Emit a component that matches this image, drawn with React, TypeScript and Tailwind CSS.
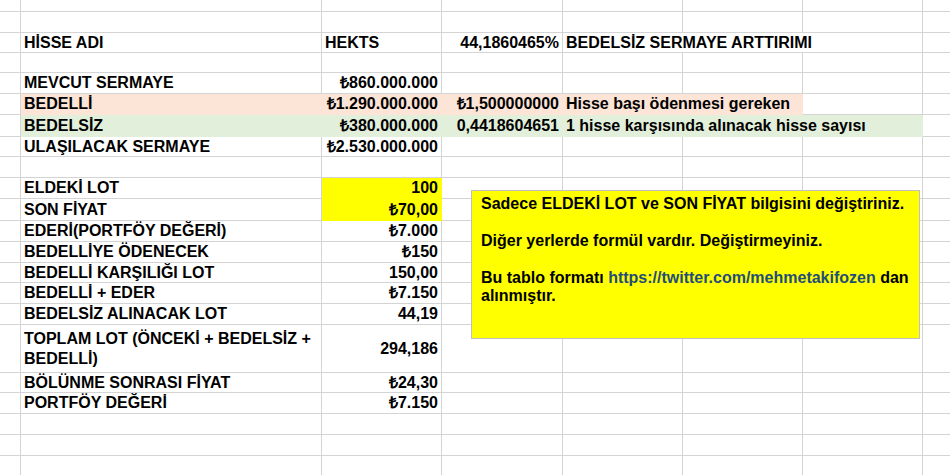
const W = [21, 301, 120, 121, 120, 120, 120, 28];

type Cell = {
  from: number;
  to?: number;
  text?: string;
  right?: boolean;
  fill?: "orange" | "green" | "yellow";
  wrap?: boolean;
};

type Row = { h: number; cells: Cell[] };

const fills = {
  orange: "bg-[#fce4d6] border-transparent",
  green: "bg-[#e2efda] border-transparent",
  yellow: "bg-[#ffff00] border-transparent",
};

const rows: Row[] = [
  { h: 12, cells: [] },
  { h: 21, cells: [] },
  {
    h: 20,
    cells: [
      { from: 1, text: "HİSSE ADI" },
      { from: 2, text: "HEKTS" },
      { from: 3, text: "44,1860465%", right: true },
      { from: 4, to: 6, text: "BEDELSİZ SERMAYE ARTTIRIMI" },
    ],
  },
  { h: 20, cells: [] },
  {
    h: 21,
    cells: [
      { from: 1, text: "MEVCUT SERMAYE" },
      { from: 2, text: "₺860.000.000", right: true },
    ],
  },
  {
    h: 21,
    cells: [
      { from: 1, text: "BEDELLİ", fill: "orange" },
      { from: 2, text: "₺1.290.000.000", right: true, fill: "orange" },
      { from: 3, text: "₺1,500000000", right: true, fill: "orange" },
      { from: 4, to: 5, text: "Hisse başı ödenmesi gereken", fill: "orange" },
    ],
  },
  {
    h: 22,
    cells: [
      { from: 1, text: "BEDELSİZ", fill: "green" },
      { from: 2, text: "₺380.000.000", right: true, fill: "green" },
      { from: 3, text: "0,4418604651", right: true, fill: "green" },
      { from: 4, to: 6, text: "1 hisse karşısında alınacak hisse sayısı", fill: "green" },
    ],
  },
  {
    h: 20,
    cells: [
      { from: 1, text: "ULAŞILACAK SERMAYE" },
      { from: 2, text: "₺2.530.000.000", right: true },
    ],
  },
  { h: 21, cells: [] },
  {
    h: 21,
    cells: [
      { from: 1, text: "ELDEKİ LOT" },
      { from: 2, text: "100", right: true, fill: "yellow" },
    ],
  },
  {
    h: 22,
    cells: [
      { from: 1, text: "SON FİYAT" },
      { from: 2, text: "₺70,00", right: true, fill: "yellow" },
    ],
  },
  {
    h: 21,
    cells: [
      { from: 1, text: "EDERİ(PORTFÖY DEĞERİ)" },
      { from: 2, text: "₺7.000", right: true },
    ],
  },
  {
    h: 21,
    cells: [
      { from: 1, text: "BEDELLİYE ÖDENECEK" },
      { from: 2, text: "₺150", right: true },
    ],
  },
  {
    h: 20,
    cells: [
      { from: 1, text: "BEDELLİ KARŞILIĞI LOT" },
      { from: 2, text: "150,00", right: true },
    ],
  },
  {
    h: 21,
    cells: [
      { from: 1, text: "BEDELLİ + EDER" },
      { from: 2, text: "₺7.150", right: true },
    ],
  },
  {
    h: 21,
    cells: [
      { from: 1, text: "BEDELSİZ ALINACAK LOT" },
      { from: 2, text: "44,19", right: true },
    ],
  },
  {
    h: 48,
    cells: [
      { from: 1, text: "TOPLAM LOT (ÖNCEKİ + BEDELSİZ + BEDELLİ)", wrap: true },
      { from: 2, text: "294,186", right: true },
    ],
  },
  {
    h: 20,
    cells: [
      { from: 1, text: "BÖLÜNME SONRASI FİYAT" },
      { from: 2, text: "₺24,30", right: true },
    ],
  },
  {
    h: 21,
    cells: [
      { from: 1, text: "PORTFÖY DEĞERİ" },
      { from: 2, text: "₺7.150", right: true },
    ],
  },
  { h: 21, cells: [] },
  { h: 21, cells: [] },
  { h: 21, cells: [] },
];

function SheetRow({ row }: { row: Row }) {
  const out = [];
  let c = 0;
  while (c < W.length) {
    const cell = row.cells.find((x) => x.from === c) ?? { from: c };
    const to = cell.to ?? c;
    let width = 0;
    for (let i = c; i <= to; i++) width += W[i];
    out.push(
      <div
        key={c}
        className={`flex shrink-0 items-center border-r border-b px-[3px] ${
          cell.fill ? fills[cell.fill] : "border-[#d4d4d4]"
        } ${cell.right ? "justify-end" : ""} ${
          cell.wrap ? "leading-[20px] whitespace-normal" : "whitespace-nowrap leading-[18px]"
        }`}
        style={{ width }}
      >
        {cell.text}
      </div>
    );
    c = to + 1;
  }
  return (
    <div className="flex shrink-0" style={{ height: row.h }}>
      {out}
    </div>
  );
}

export default function App() {
  return (
    <div className="relative h-[475px] w-[950px] overflow-hidden bg-white font-['Liberation_Sans',Arial,sans-serif] text-[16px] font-bold text-black">
      <div className="flex flex-col">
        {rows.map((row, i) => (
          <SheetRow key={i} row={row} />
        ))}
      </div>

      <div className="absolute left-[471px] top-[190px] h-[149px] w-[449px] border border-[#bfbfbf] bg-[#ffff00] pl-[9px] pt-[4px] leading-[18.4px] whitespace-nowrap">
        <div>Sadece ELDEKİ LOT ve SON FİYAT bilgisini değiştiriniz.</div>
        <div className="h-[18.4px]" />
        <div>Diğer yerlerde formül vardır. Değiştirmeyiniz.</div>
        <div className="h-[18.4px]" />
        <div>
          Bu tablo formatı{" "}
          <span className="text-[#1f4e79]">https://twitter.com/mehmetakifozen</span> dan
        </div>
        <div>alınmıştır.</div>
      </div>
    </div>
  );
}
